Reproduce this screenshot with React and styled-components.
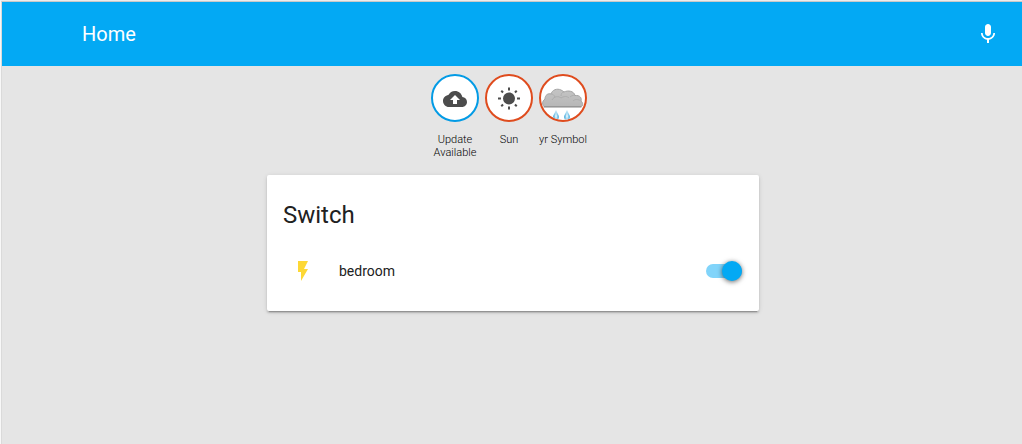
import React, { useState } from "react";
import styled, { createGlobalStyle } from "styled-components";

const GlobalStyle = createGlobalStyle`
  * { box-sizing: border-box; }
  body {
    margin: 0;
    background: #e5e5e5;
    color: #212121;
    font-family: Roboto, "Noto Sans", sans-serif;
  }
`;

const Page = styled.div`
  min-height: 100vh;
  border-top: 1px solid #ececec;
  border-left: 1px solid #f8f8f8;
`;

const Frame = styled.div`
  min-height: calc(100vh - 1px);
  border-top: 1px solid #c9c9c9;
  border-left: 1px solid #dadada;
`;

const Toolbar = styled.header`
  display: flex;
  align-items: center;
  justify-content: space-between;
  height: 64px;
  padding: 0 14px 0 80px;
  background: #03a9f4;
  color: #fff;
`;

const Title = styled.h1`
  margin: 0;
  font-size: 20px;
  font-weight: 400;
  line-height: 28px;
`;

const IconButton = styled.button`
  display: flex;
  width: 40px;
  height: 40px;
  padding: 8px;
  border: 0;
  background: none;
  color: inherit;
  cursor: pointer;
`;

const Icon = styled.svg`
  display: block;
  width: 24px;
  height: 24px;
  fill: currentColor;
`;

const Content = styled.main`
  display: flex;
  flex-direction: column;
  align-items: center;
  gap: 16px;
  padding: 8px 8px 16px 10px;
`;

const Badges = styled.div`
  display: flex;
  gap: 6px;
  padding-right: 8px;
`;

const Badge = styled.div`
  width: 48px;
`;

const BadgeCircle = styled.div`
  display: flex;
  align-items: center;
  justify-content: center;
  height: 48px;
  padding-top: 2px;
  overflow: hidden;
  border: 2px solid ${(p) => p.$color};
  border-radius: 50%;
  background: #fff;
  color: #4c4c4c;
`;

const BadgeLabel = styled.div`
  display: flex;
  justify-content: center;
  margin-top: 11px;
  color: #000;
  font-size: 11px;
  font-weight: 300;
  line-height: 13px;
  text-align: center;
`;

const LabelText = styled.span`
  flex: none;
  max-width: 53px;
`;

const Weather = styled.svg`
  display: block;
  flex: none;
  width: 44px;
  height: 42px;
`;

const Card = styled.section`
  width: 100%;
  max-width: 492px;
  padding: 24px 16px 20px;
  border-radius: 2px;
  background: #fff;
  box-shadow: 0 2px 2px 0 rgba(0, 0, 0, 0.14), 0 1px 5px 0 rgba(0, 0, 0, 0.12),
    0 3px 1px -2px rgba(0, 0, 0, 0.2);
`;

const CardTitle = styled.h2`
  margin: 0 0 20px;
  font-size: 24px;
  font-weight: 400;
  line-height: 32px;
`;

const EntityRow = styled.div`
  display: flex;
  align-items: center;
  gap: 16px;
  height: 40px;
`;

const EntityIcon = styled.div`
  display: flex;
  justify-content: center;
  width: 40px;
  color: #fdd835;
`;

const EntityName = styled.label`
  flex: 1;
  font-size: 14px;
  line-height: 20px;
`;

const Toggle = styled.input`
  appearance: none;
  display: flex;
  align-items: center;
  width: 36px;
  height: 14px;
  margin: 0 1px 0 0;
  border-radius: 8px;
  background: ${(p) => (p.checked ? "#81d4fa" : "#9e9e9e")};
  cursor: pointer;

  &::before {
    content: "";
    flex: none;
    width: 20px;
    height: 20px;
    margin-left: ${(p) => (p.checked ? "16px" : "0")};
    border-radius: 50%;
    background: ${(p) => (p.checked ? "#03a9f4" : "#fafafa")};
    box-shadow: 0 1px 5px 0 rgba(0, 0, 0, 0.6);
  }
`;

const paths = {
  mic: "M12 14c1.66 0 2.99-1.34 2.99-3L15 5c0-1.66-1.34-3-3-3S9 3.34 9 5v6c0 1.66 1.34 3 3 3zm5.3-3c0 3-2.54 5.1-5.3 5.1S6.7 14 6.7 11H5c0 3.41 2.72 6.23 6 6.72V21h2v-3.28c3.28-.48 6-3.3 6-6.72h-1.7z",
  upload:
    "M19.35 10.04C18.67 6.59 15.64 4 12 4 9.11 4 6.6 5.64 5.35 8.04 2.34 8.36 0 10.91 0 14c0 3.31 2.69 6 6 6h13c2.76 0 5-2.24 5-5 0-2.64-2.05-4.78-4.65-4.96zM14 13v4h-4v-4H7l5-5 5 5h-3z",
  sun: "M3.55,18.54L4.96,19.95L6.76,18.16L5.34,16.74M11,22.45C11.32,22.45 13,22.45 13,22.45V19.5H11M12,5.5A6,6 0 0,0 6,11.5A6,6 0 0,0 12,17.5A6,6 0 0,0 18,11.5C18,8.18 15.31,5.5 12,5.5M20,12.5H23V10.5H20M17.24,18.16L19.04,19.95L20.45,18.54L18.66,16.74M20.45,4.46L19.04,3.05L17.24,4.84L18.66,6.26M13,0.55H11V3.5H13M4,10.5H1V12.5H4M6.76,4.84L4.96,3.05L3.55,4.46L5.34,6.26L6.76,4.84Z",
  flash: "M7 2v11h3v9l7-12h-4l4-8z",
};

const Glyph = ({ name }) => (
  <Icon viewBox="0 0 24 24" aria-hidden="true">
    <path d={paths[name]} />
  </Icon>
);

const RainCloud = () => (
  <Weather viewBox="1 2 44 42" aria-hidden="true">
    <defs>
      <linearGradient id="cloud" x1="0" y1="0" x2="0" y2="1">
        <stop offset="0" stopColor="#c4c4c4" />
        <stop offset="1" stopColor="#b7b7b7" />
      </linearGradient>
      <linearGradient id="drop" x1="0" y1="0" x2="1" y2="0">
        <stop offset="0" stopColor="#45a9dc" />
        <stop offset="0.5" stopColor="#bfe6f7" />
        <stop offset="1" stopColor="#4fb0e0" />
      </linearGradient>
    </defs>
    <path
      d="M4 30.5 C2 29 2 25 5 23 C5 19 8 17 11 18 C12 14 17 12 21 14 C22 14.500 23 15 24 16 C28 14 34 15 35 19.500 C40 19 42 22 41 25 C43.500 27 43 30.500 41 30.500 Z"
      fill="url(#cloud)"
      stroke="#a3a3a3"
    />
    <path d="M4 31 H41" stroke="#888" strokeLinecap="round" />
    <path
      d="M11 18 C13 18 14 19 15 21 M12 24 C14 20 19 20 21 22 M24 16 C22 16 21 18 21 20 M21 22 C24 20 27 20 29 22 M35 19.500 C33 19 31 20 30 21 M33 25 C35 23 38 23 41 25"
      fill="none"
      stroke="#adadad"
    />
    {[16, 27].map((x) => (
      <g key={x} transform={`translate(${x} 34)`}>
        <path
          d="M0 0 C1 3 3 5 3 7 C3 11 -3 11 -3 7 C-3 5 -1 3 0 0 Z"
          fill="url(#drop)"
        />
        <path d="M0 4 C1 6 1 7 0 8 C-1 7 -1 6 0 4 Z" fill="#e6f6fd" />
      </g>
    ))}
  </Weather>
);

const badges = [
  { label: "Update Available", color: "#039be5", art: <Glyph name="upload" /> },
  { label: "Sun", color: "#df4c1e", art: <Glyph name="sun" /> },
  { label: "yr Symbol", color: "#df4c1e", art: <RainCloud /> },
];

export default function App() {
  const [on, setOn] = useState(true);
  return (
    <>
      <GlobalStyle />
      <Page>
        <Frame>
          <Toolbar>
            <Title>Home</Title>
            <IconButton type="button" aria-label="Voice command">
              <Glyph name="mic" />
            </IconButton>
          </Toolbar>
          <Content>
            <Badges>
              {badges.map((b) => (
                <Badge key={b.label}>
                  <BadgeCircle $color={b.color}>{b.art}</BadgeCircle>
                  <BadgeLabel>
                    <LabelText>{b.label}</LabelText>
                  </BadgeLabel>
                </Badge>
              ))}
            </Badges>
            <Card>
              <CardTitle>Switch</CardTitle>
              <EntityRow>
                <EntityIcon>
                  <Glyph name="flash" />
                </EntityIcon>
                <EntityName htmlFor="bedroom">bedroom</EntityName>
                <Toggle
                  id="bedroom"
                  type="checkbox"
                  role="switch"
                  checked={on}
                  onChange={(e) => setOn(e.target.checked)}
                />
              </EntityRow>
            </Card>
          </Content>
        </Frame>
      </Page>
    </>
  );
}
